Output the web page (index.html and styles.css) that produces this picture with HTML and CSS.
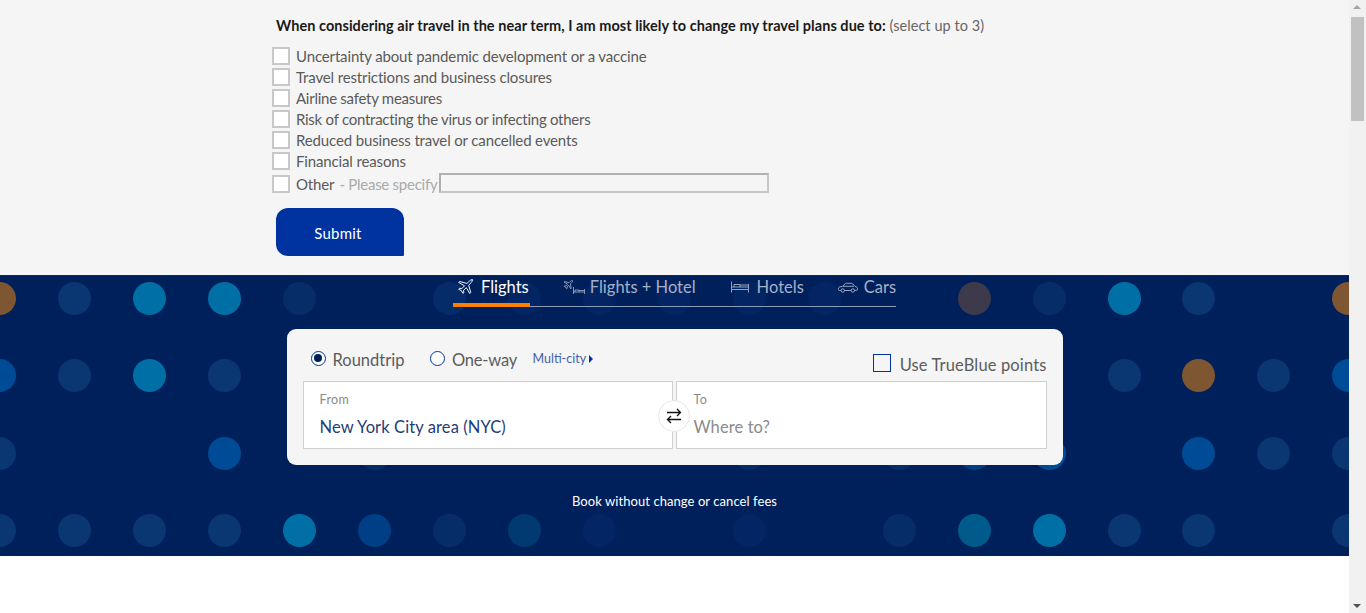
FILE: index.html
```html
<!DOCTYPE html>
<html lang="en">
<head>
<meta charset="utf-8">
<title>Flights</title>
<link rel="stylesheet" href="styles.css">
</head>
<body>
<div class="page">
  <main class="main">
    <section class="survey">
      <p class="question"><b>When considering air travel in the near term, I am most likely to change my travel plans due to:</b> <span class="hint">(select up to 3)</span></p>
      <ul class="options">
        <li class="option"><span class="box"></span>Uncertainty about pandemic development or a vaccine</li>
        <li class="option"><span class="box"></span>Travel restrictions and business closures</li>
        <li class="option option-tight"><span class="box"></span>Airline safety measures</li>
        <li class="option option-tight"><span class="box"></span>Risk of contracting the virus or infecting others</li>
        <li class="option"><span class="box"></span>Reduced business travel or cancelled events</li>
        <li class="option"><span class="box"></span>Financial reasons</li>
        <li class="option option-other"><span class="box"></span>Other<span class="specify">- Please specify</span><span class="specify-input"></span></li>
      </ul>
      <button class="submit" type="button">Submit</button>
    </section>
    <section class="hero">
      <div class="dots">
        <i class="dot brown"></i><i class="dot dim"></i><i class="dot teal"></i><i class="dot teal"></i><i class="dot dim2"></i><i class="dot none"></i><i class="dot faint2"></i><i class="dot faint"></i><i class="dot faint"></i><i class="dot faint"></i><i class="dot faint"></i><i class="dot faint"></i><i class="dot none"></i><i class="dot gray"></i><i class="dot dim2"></i><i class="dot teal"></i><i class="dot dim"></i><i class="dot none"></i><i class="dot brown"></i>
        <i class="dot blue"></i><i class="dot dim"></i><i class="dot teal"></i><i class="dot dim"></i><i class="dot none"></i><i class="dot none"></i><i class="dot none"></i><i class="dot none"></i><i class="dot none"></i><i class="dot none"></i><i class="dot none"></i><i class="dot none"></i><i class="dot none"></i><i class="dot none"></i><i class="dot none"></i><i class="dot dim"></i><i class="dot brown"></i><i class="dot dim"></i><i class="dot blue"></i>
        <i class="dot dim"></i><i class="dot none"></i><i class="dot none"></i><i class="dot blue"></i><i class="dot none"></i><i class="dot dim2"></i><i class="dot none"></i><i class="dot none"></i><i class="dot none"></i><i class="dot none"></i><i class="dot dim2"></i><i class="dot none"></i><i class="dot dim2"></i><i class="dot blue2"></i><i class="dot blue"></i><i class="dot none"></i><i class="dot blue"></i><i class="dot dim"></i><i class="dot dim"></i>
        <i class="dot dim"></i><i class="dot dim"></i><i class="dot dim"></i><i class="dot dim"></i><i class="dot teal"></i><i class="dot blue2"></i><i class="dot dim2"></i><i class="dot teal3"></i><i class="dot faint"></i><i class="dot none"></i><i class="dot faint"></i><i class="dot none"></i><i class="dot dim2"></i><i class="dot teal2"></i><i class="dot teal"></i><i class="dot dim"></i><i class="dot dim"></i><i class="dot none"></i><i class="dot dim"></i>
      </div>
      <div class="hero-content">
        <nav class="tabs">
          <a class="tab tab-active">
            <svg class="icon icon-plane" viewBox="0 0 18 18" fill="none" stroke="currentColor" stroke-width="1"><path d="M16.600 1.200c-1-.5-2.200-.1-3 .6L10.500 4.700 2.800 2.600 1.700 3.600l6.300 3.600-2.900 3-2.300-.4-1 1 2.900 1.600 1.600 2.900 1-1-.4-2.300 3-2.900 3.600 6.300 1-1.100-2.100-7.700 2.900-3.100c.7-.8 1.100-2 .6-3.100z"/></svg>
            Flights
          </a>
          <a class="tab">
            <svg class="icon icon-combo" viewBox="0 0 22 15" fill="none" stroke="currentColor" stroke-width=".8"><path d="M9.500.6c-.6-.2-1.300 0-1.800.4L6 2.700 1.700 1.500 1 2.100l3.600 2.100-1.600 1.700-1.300-.2-.6.600 1.600.9.900 1.600.6-.6-.2-1.300 1.700-1.600 2 3.500.6-.6L7.300 4 9 2.300c.4-.5.700-1.100.5-1.700z"/><path d="M10.500 7v7M21.500 9v5M10.500 12h11M12 12v-2h4v2M16 10.500h5.500"/></svg>
            Flights + Hotel
          </a>
          <a class="tab tab-hotels">
            <svg class="icon icon-bed" viewBox="0 0 18 12" fill="none" stroke="currentColor" stroke-width=".9"><path d="M.5.5v11M17.500 3v8.500M.5 8.500h17M.5 6h17M3 6V3.500h6V6M9 4h8.500"/></svg>
            Hotels
          </a>
          <a class="tab tab-last">
            <svg class="icon icon-car" viewBox="0 0 20 11" fill="none" stroke="currentColor" stroke-width=".9"><path d="M3 8.500H1.200C.7 8.500.5 8 .5 7.500V6.300c0-.9.800-1.300 1.700-1.500l2.300-.5L7 1.900c.4-.4 1-.6 1.500-.6h4.700c.6 0 1.100.2 1.500.6l2.300 2.400 1.300.5c.7.300 1.200.9 1.200 1.700v1.200c0 .3-.3.600-.6.600H16.600M6.500 8.500h6.600"/><circle cx="4.800" cy="8.500" r="1.700"/><circle cx="14.800" cy="8.500" r="1.700"/><path d="M5 4.300h11"/></svg>
            Cars
          </a>
        </nav>
        <form class="card">
          <div class="card-top">
            <label class="radio-item"><span class="radio radio-on"></span>Roundtrip</label>
            <label class="radio-item radio-oneway"><span class="radio"></span>One-way</label>
            <a class="multi">Multi-city<span class="caret"></span></a>
            <label class="points"><span class="points-box"></span>Use TrueBlue points</label>
          </div>
          <div class="fields">
            <div class="field field-from">
              <span class="field-label">From</span>
              <span class="field-value">New York City area (NYC)</span>
              <span class="swap">
                <svg viewBox="0 0 16 16" fill="none" stroke="#111" stroke-width="1.300"><path d="M1 4.500h13.500M11 1l3.500 3.500L11 8M15 11.500H1.500M5 8l-3.500 3.500L5 15"/></svg>
              </span>
            </div>
            <div class="field field-to">
              <span class="field-label">To</span>
              <span class="field-value field-placeholder">Where to?</span>
            </div>
          </div>
        </form>
        <p class="note">Book without change or cancel fees</p>
      </div>
    </section>
    <div class="blank"></div>
  </main>
  <aside class="scrollbar">
    <span class="arrow arrow-up"></span>
    <span class="thumb"></span>
    <span class="track"></span>
    <span class="arrow arrow-down"></span>
  </aside>
</div>
</body>
</html>
```
FILE: styles.css
```css
* { box-sizing: border-box; }
html, body { margin: 0; padding: 0; height: 613px; overflow: hidden; }
body { font-family: "Lato", "Liberation Sans", sans-serif; color: #555; background: #fff; }

.page { display: flex; width: 1366px; height: 613px; }
.main { width: 1349px; display: flex; flex-direction: column; }

.scrollbar { width: 17px; background: #f1f1f1; display: flex; flex-direction: column; align-items: center; }
.arrow { height: 17px; width: 17px; position: relative; flex: none; }
.arrow-up::after, .arrow-down::after { content: ""; position: absolute; left: 4px; border-left: 4.5px solid transparent; border-right: 4.5px solid transparent; }
.arrow-up::after { top: 5px; border-bottom: 4.5px solid #a3a3a3; }
.arrow-down::after { bottom: 5px; border-top: 4.5px solid #505050; }
.thumb { width: 13px; height: 104px; background: #c1c1c1; flex: none; }
.track { flex: 1; }

.survey { background: #f5f5f5; height: 275px; padding: 17px 0 0 276px; }
.question { margin: 0; font-size: 14.5px; line-height: 18px; color: #1a1a1a; letter-spacing: .044px; }
.question b { font-weight: 700; }
.hint { color: #666; letter-spacing: .05px; }

.options { list-style: none; margin: 10px 0 0 -4px; padding: 0; }
.option { display: flex; align-items: center; height: 21px; font-size: 15px; color: #5a5a5a; letter-spacing: -.14px; }
.option-tight { letter-spacing: -.26px; }
.box { width: 18px; height: 18px; background: #fff; border: 2px solid #c8c8c8; margin-right: 6px; flex: none; }
.option-other { height: 20px; margin-top: 3px; }
.specify { color: #aaa; margin: 0 2px 0 5px; letter-spacing: -.26px; }
.specify-input { width: 330px; height: 20px; background: #f5f5f5; border: 2px solid #c6c6c6; border-top-color: #b0b0b0; border-left-color: #b0b0b0; margin-top: -2px; }

.submit { display: block; margin-top: 14px; width: 128px; height: 48px; padding: 2px 4px 0 0; border: 0; border-radius: 12px 12px 1px 12px; background: #0033a0; color: #fff; font: 400 15px "Lato", sans-serif; letter-spacing: .2px; }

.hero { position: relative; height: 281px; background: #00205b; border-top: 1px solid #002a78; overflow: hidden; }
.dots { position: absolute; left: -37.500px; top: -16px; display: grid; grid-template-columns: repeat(19, 74.950px); grid-auto-rows: 77.300px; justify-items: center; align-items: center; }
.dot { width: 33px; height: 33px; border-radius: 50%; display: block; }
.none { background: transparent; }
.brown { background: #7f5632; }
.dim { background: #0a3672; }
.dim2 { background: #072d69; }
.faint { background: #032563; }
.faint2 { background: #052c68; }
.teal { background: #006fa5; }
.teal2 { background: #005a8c; }
.teal3 { background: #003a70; }
.blue { background: #004b95; }
.blue2 { background: #003f85; }
.gray { background: #3d3a4c; }

.hero-content { position: relative; display: flex; flex-direction: column; align-items: center; }
.tabs { width: 443px; height: 31px; display: flex; align-items: flex-start; border-bottom: 1px solid #8c9bb8; color: #a5b1c8; font-size: 16.500px; }
.tab { display: flex; align-items: center; height: 31px; padding: 1px 0 10px; margin-right: 35px; white-space: nowrap; }
.tab-active { color: #fff; border-bottom: 4px solid #ff7f00; padding: 1px 1px 6px 4px; margin-right: 33px; }
.tab-hotels { margin-right: 34px; }
.tab-last { margin-right: 0; }
.icon { display: block; flex: none; }
.icon-plane { width: 17px; height: 17px; margin-right: 7px; }
.icon-combo { width: 22px; height: 15px; margin-right: 5px; }
.icon-bed { width: 18px; height: 12px; margin-right: 8px; }
.icon-car { width: 20px; height: 11px; margin-right: 6px; }

.card { width: 776px; height: 136px; margin-top: 22px; background: #f5f5f5; border-radius: 9px; padding: 0 16px; }
.card-top { display: flex; align-items: flex-start; height: 52px; font-size: 16.500px; color: #5c5c5c; }
.radio-item { display: flex; align-items: center; margin-top: 21px; height: 20px; margin-right: 25.500px; }
.radio-oneway { letter-spacing: -.2px; }
.radio { width: 15px; height: 15px; border-radius: 50%; border: 1.500px solid #0033a0; margin: -4px 7px 0 8px; position: relative; background: #fff; flex: none; }
.radio-item + .radio-item .radio { margin-left: 0; }
.radio-on::after { content: ""; position: absolute; inset: 2.500px; background: #00205b; border-radius: 50%; }
.multi { margin: 22px 0 0 -10px; font-size: 12.500px; line-height: 15px; color: #3f5fae; display: flex; align-items: center; }
.caret { margin-left: 3px; width: 0; height: 0; border-left: 4px solid #0033a0; border-top: 4px solid transparent; border-bottom: 4px solid transparent; }
.points { margin: 26px 0 0 auto; display: flex; align-items: center; height: 20px; letter-spacing: .14px; }
.points-box { width: 18px; height: 18px; border: 1.500px solid #0033a0; margin: -4px 9px 0 0; background: #f5f5f5; }

.fields { display: flex; gap: 3px; }
.field { position: relative; height: 68px; background: #fff; border: 1px solid #d0d0d0; display: flex; flex-direction: column; padding: 10px 16px 0; }
.field-from { width: 370px; }
.field-to { width: 371px; padding-left: 17px; }
.field-label { font-size: 12.500px; line-height: 15px; color: #8a8a8a; letter-spacing: .35px; }
.field-value { font-size: 16.500px; line-height: 20px; margin-top: 10px; color: #1f3d78; letter-spacing: .1px; }
.field-placeholder { color: #8a8a8a; }
.swap { position: absolute; right: -18px; top: 18px; width: 32px; height: 32px; border-radius: 50%; background: #fff; border: 1px solid #e8e8e8; display: flex; align-items: center; justify-content: center; z-index: 1; }
.swap svg { width: 16px; height: 16px; display: block; }

.note { margin: 28px 0 0; font-size: 13px; line-height: 16px; color: #fff; letter-spacing: .07px; }

.blank { flex: 1; background: #fff; }
```
